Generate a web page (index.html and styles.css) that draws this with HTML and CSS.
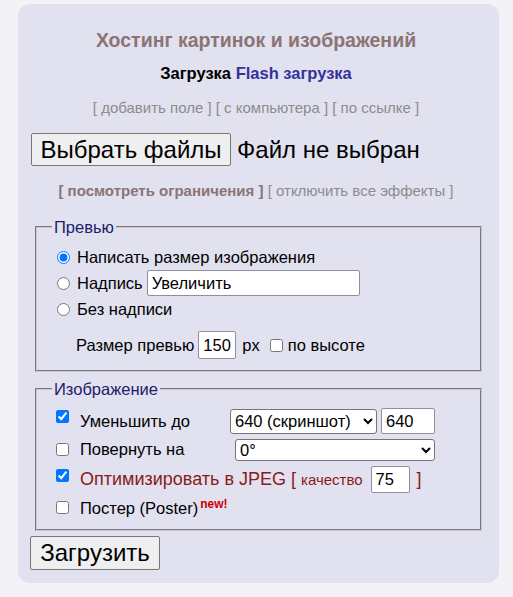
FILE: index.html
```html
<!DOCTYPE html>
<html lang="ru">
<head>
<meta charset="utf-8">
<title>Хостинг картинок и изображений</title>
<link rel="stylesheet" href="styles.css">
</head>
<body>
<div class="panel">
  <h1 class="title">Хостинг картинок и изображений</h1>
  <div class="tabs"><b>Загрузка</b> <a class="tab-link" href="#">Flash загрузка</a></div>
  <div class="links">[ добавить поле ] [ с компьютера ] [ по ссылке ]</div>
  <div class="file-row">
    <span class="btn btn-big">Выбрать файлы</span>
    <span class="file-name">Файл не выбран</span>
  </div>
  <div class="links links-2"><b class="strong-link">[ посмотреть ограничения ]</b> [ отключить все эффекты ]</div>

  <fieldset class="box box-preview">
    <legend>Превью</legend>
    <div class="row r1"><input type="radio" name="p" checked><span class="lbl">Написать размер изображения</span></div>
    <div class="row r2"><input type="radio" name="p"><span class="lbl">Надпись</span><input class="txt txt-caption" type="text" value="Увеличить"></div>
    <div class="row r3"><input type="radio" name="p"><span class="lbl">Без надписи</span></div>
    <div class="row r4"><span>Размер превью</span><input class="txt txt-size" type="text" value="150"><span>px</span><input type="checkbox" class="cb-h"><span class="lbl-h">по высоте</span></div>
  </fieldset>

  <fieldset class="box box-image">
    <legend>Изображение</legend>
    <div class="grid">
      <div class="g-row g1">
        <input type="checkbox" class="cb-top" checked>
        <span>Уменьшить до</span>
        <span class="ctrls"><select class="sel sel-size"><option>640 (скриншот)</option></select><input class="txt txt-w" type="text" value="640"></span>
      </div>
      <div class="g-row g2">
        <input type="checkbox">
        <span>Повернуть на</span>
        <span class="ctrls"><select class="sel sel-rot"><option>0°</option></select></span>
      </div>
      <div class="g-row g3">
        <input type="checkbox" class="cb-top" checked>
        <span class="jpeg">Оптимизировать в JPEG [ <small class="q">качество</small><input class="txt txt-q" type="text" value="75"> ]</span>
      </div>
      <div class="g-row g4">
        <input type="checkbox">
        <span>Постер (Poster)<sup class="new">new!</sup></span>
      </div>
    </div>
  </fieldset>

  <button class="btn btn-big btn-submit" type="button">Загрузить</button>
</div>
</body>
</html>
```

FILE: styles.css
```css
html, body {
  margin: 0;
  padding: 0;
  background: #f2f2f7;
  font-family: "Liberation Sans", Arial, sans-serif;
  color: #000;
}

.panel {
  box-sizing: border-box;
  width: 481px;
  margin: 4px 0 0 18px;
  padding: 25px 17px 13px 12px;
  background: #e1e1f0;
  border-radius: 12px;
}

.title {
  margin: 0;
  text-align: center;
  font-size: 19.5px;
  line-height: 22px;
  font-weight: bold;
  color: #8b7474;
}

.tabs {
  margin-top: 14px;
  text-align: center;
  font-size: 16.5px;
  line-height: 16px;
  font-weight: bold;
}

.tab-link {
  color: #333399;
  text-decoration: none;
}

.links {
  margin-top: 19px;
  text-align: center;
  font-size: 15px;
  line-height: 16px;
  color: #8c8c8c;
}

.strong-link {
  color: #8b7474;
}

.file-row {
  display: flex;
  align-items: center;
  margin-top: 17px;
  padding-left: 1px;
  font-size: 24px;
}

.btn {
  display: inline-flex;
  align-items: center;
  box-sizing: border-box;
  background: #efefef;
  border: 1px solid #767676;
  border-radius: 2px;
  color: #000;
  font-family: "Liberation Sans", Arial, sans-serif;
}

.btn-big {
  height: 33px;
  padding: 0 8.5px;
  font-size: 24px;
}

.file-name {
  margin-left: 6px;
}

.links-2 {
  margin-top: 17px;
}

.box {
  margin: 19px 0 0 5px;
  padding: 12px 10px 11px 15px;
  border: 2px groove #c8c8d0;
  font-size: 16.5px;
}

.box legend {
  padding: 0 2px;
  font-size: 16.5px;
  line-height: 18px;
  color: #202068;
}

.row {
  display: flex;
  align-items: center;
}

.row input[type="radio"] {
  margin: 0 7px 0 5px;
  width: 13px;
  height: 13px;
}

.r1 { height: 19px; }
.r2 { height: 32px; }
.r3 { height: 20px; }
.r4 { height: 28px; margin-top: 12px; padding-left: 24px; }

.txt {
  box-sizing: border-box;
  height: 26px;
  border: 1px solid #8f8f9d;
  border-radius: 2px;
  background: #fff;
  padding: 0 4px;
  font-family: "Liberation Sans", Arial, sans-serif;
  font-size: 16.5px;
  color: #000;
}

.txt-caption {
  width: 213px;
  margin-left: 4px;
}

.txt-size {
  width: 38px;
  height: 28px;
  margin: 0 6px 0 4px;
}

.cb-h {
  margin: 0 5px 0 10px;
  width: 13px;
  height: 13px;
}

.box-image {
  margin-top: 8px;
  padding-top: 10px;
  padding-bottom: 14px;
}

.g-row {
  display: grid;
  grid-template-columns: 28px 150px auto;
  align-items: center;
}

.g-row input[type="checkbox"] {
  margin: 0 0 0 4px;
  width: 13px;
  height: 13px;
}

.g-row input.cb-top {
  align-self: start;
  margin-top: 2px;
}

.g3 input.cb-top {
  margin-top: 3px;
}

.g1 { height: 26px; }
.g2 { height: 23px; margin-top: 4px; }
.g3 { height: 27px; margin-top: 5px; }
.g4 { height: 18px; margin-top: 4px; }

.g3 > span, .g4 > span {
  grid-column: 2 / 4;
}

.ctrls {
  display: flex;
  align-items: center;
}

.sel {
  box-sizing: border-box;
  background: #fff;
  border: 1px solid #767676;
  border-radius: 3px;
  font-family: "Liberation Sans", Arial, sans-serif;
  font-size: 16.5px;
  color: #000;
}

.sel-size {
  width: 147px;
  height: 25px;
}

.txt-w {
  width: 54px;
  margin-left: 4px;
}

.sel-rot {
  width: 200px;
  height: 22px;
  margin-left: 5px;
}

.jpeg {
  display: flex;
  align-items: center;
  white-space: pre;
  font-size: 18px;
  color: #8b1a1a;
}

.q {
  font-size: 15px;
  margin-right: 8px;
}

.txt-q {
  width: 39px;
  height: 27px;
  margin-right: 2px;
}

.new {
  font-size: 12px;
  font-weight: bold;
  color: #cc0000;
  margin-left: 2px;
  vertical-align: 6px;
}

.btn-submit {
  margin-top: 5px;
  width: 130px;
  height: 34px;
  justify-content: center;
}
```
